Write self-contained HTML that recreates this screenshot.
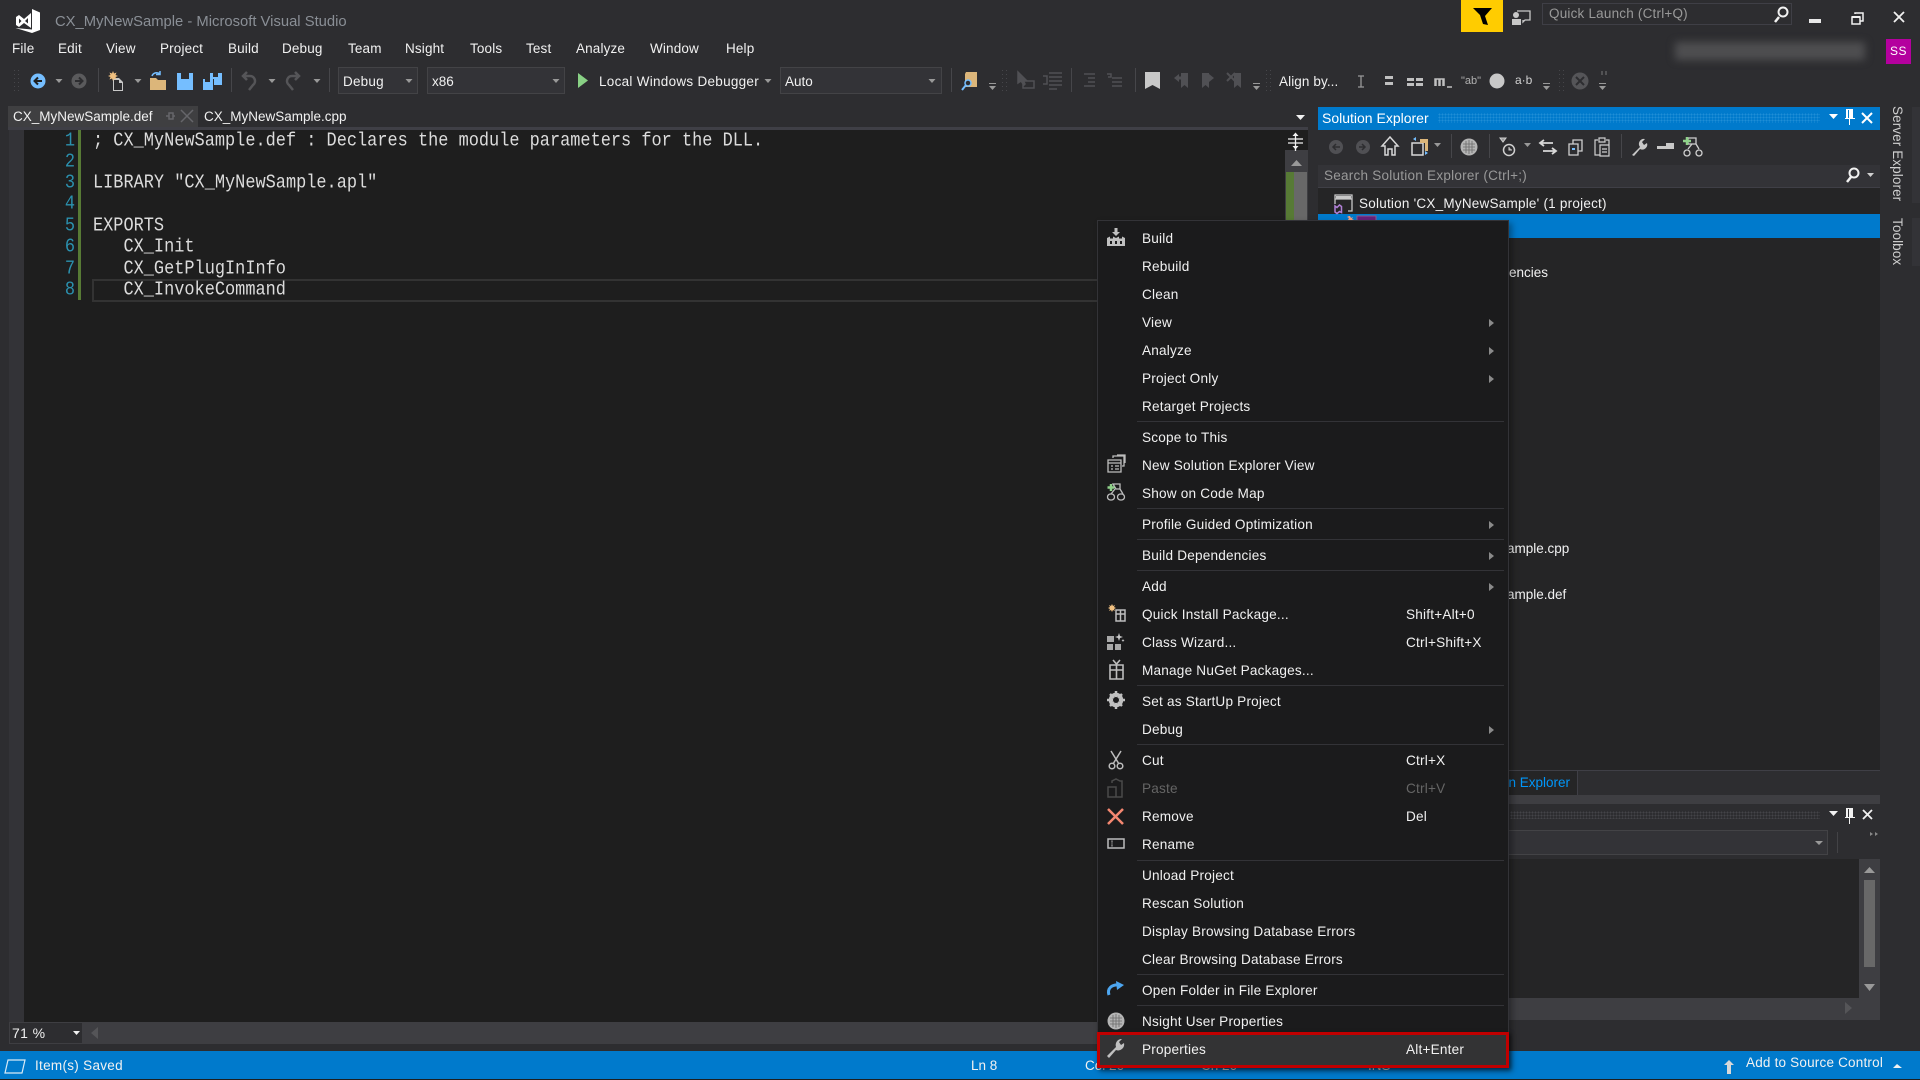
<!DOCTYPE html>
<html><head><meta charset="utf-8"><title>CX_MyNewSample - Microsoft Visual Studio</title>
<style>
html,body{margin:0;padding:0;width:1920px;height:1080px;overflow:hidden;background:#2d2d30}
body{position:relative;font-family:"Liberation Sans",sans-serif;font-size:13.5px;color:#f1f1f1}
.b{position:absolute}
.t{position:absolute;white-space:nowrap;line-height:20px;height:20px}
.mb{letter-spacing:.15px}
.c{position:absolute;white-space:pre;font-family:"Liberation Mono",monospace;font-size:16.93px;line-height:21px;color:#dcdcdc;left:93px;transform:scale(1,1.12);transform-origin:0 50%}
.n{position:absolute;font-family:"Liberation Mono",monospace;font-size:16.93px;line-height:21px;color:#2b91af;left:63px;width:12px;text-align:right;transform:scale(1,1.12)}
.m{position:absolute;left:1142px;white-space:nowrap;line-height:20px;height:20px;color:#f1f1f1;font-size:13.6px;letter-spacing:.2px}
.s{position:absolute;left:1406px;white-space:nowrap;line-height:20px;height:20px;color:#f1f1f1;font-size:13.6px;letter-spacing:.2px}
.sp{position:absolute;left:1137px;width:367px;height:1px;background:#333337}
.cb{position:absolute;box-sizing:border-box;border:1px solid #434346;background:#333337}
svg{position:absolute;left:0;top:0}
</style></head>
<body>
<!-- editor -->
<div class="b" style="left:8px;top:106px;width:190px;height:21px;background:#3f3f41"></div>
<div class="b" style="left:8px;top:127px;width:1300px;height:3px;background:#3f3f46"></div>
<div class="b" style="left:9px;top:130px;width:15px;height:892px;background:#333337"></div>
<div class="b" style="left:24px;top:130px;width:1261px;height:892px;background:#1e1e1e"></div>
<div class="b" style="left:78px;top:130px;width:3px;height:170px;background:#577a35"></div>
<div class="b" style="left:92px;top:279px;width:1010px;height:19px;border:2px solid #333;border-right:0"></div>
<div class="b" style="left:1285px;top:130px;width:23px;height:892px;background:#3e3e42"></div>
<div class="b" style="left:1285px;top:130px;width:23px;height:20px;background:#1e1e1e"></div>
<div class="b" style="left:1286px;top:172px;width:21px;height:60px;background:#686868"></div>
<div class="b" style="left:1286px;top:172px;width:8px;height:60px;background:#577a35"></div>
<div class="b" style="left:9px;top:1022px;width:1090px;height:22px;background:#3e3e42"></div>
<div class="cb" style="left:9px;top:1022px;width:74px;height:22px;background:#2d2d30;border-color:#3e3e42"></div>

<div class="t" style="left:12px;top:1023px;font-size:14px;letter-spacing:.4px;color:#f1f1f1">71 %</div>

<div class="n" style="top:131px">1</div><div class="n" style="top:152px">2</div><div class="n" style="top:173px">3</div><div class="n" style="top:194px">4</div><div class="n" style="top:216px">5</div><div class="n" style="top:237px">6</div><div class="n" style="top:259px">7</div><div class="n" style="top:280px">8</div>
<div class="c" style="top:131px">; CX_MyNewSample.def : Declares the module parameters for the DLL.</div>
<div class="c" style="top:173px">LIBRARY "CX_MyNewSample.apl"</div>
<div class="c" style="top:216px">EXPORTS</div>
<div class="c" style="top:237px">   CX_Init</div>
<div class="c" style="top:259px">   CX_GetPlugInInfo</div>
<div class="c" style="top:280px">   CX_InvokeCommand</div>

<!-- solution explorer -->
<div class="b" style="left:1318px;top:107px;width:562px;height:663px;background:#252526"></div>
<div class="b" style="left:1318px;top:130px;width:562px;height:35px;background:#2d2d30"></div>
<div class="b" style="left:1318px;top:107px;width:562px;height:23px;background:#007acc"></div>
<div class="b" style="left:1438px;top:113px;width:382px;height:10px;background-image:radial-gradient(#1f8ed6 .8px,transparent .9px);background-size:3px 3px"></div>
<div class="b" style="left:1318px;top:165px;width:562px;height:22px;background:#333337;border-bottom:1px solid #3f3f46"></div>
<div class="b" style="left:1318px;top:214px;width:562px;height:24px;background:#007acc"></div>
<div class="t" style="left:1322px;top:108px;font-size:14px;color:#fff">Solution Explorer</div>
<div class="t" style="left:1324px;top:166px;font-size:13.5px;color:#999;letter-spacing:.25px">Search Solution Explorer (Ctrl+;)</div>
<div class="t" style="left:1359px;top:194px;font-size:13.5px;color:#f1f1f1;letter-spacing:.23px">Solution 'CX_MyNewSample' (1 project)</div>
<div class="t" style="left:1509px;top:263px;font-size:13.5px">encies</div>
<div class="t" style="left:1507px;top:539px;font-size:13.5px">ample.cpp</div>
<div class="t" style="left:1507px;top:585px;font-size:13.5px">ample.def</div>
<!-- lower panel -->
<div class="b" style="left:1318px;top:770px;width:562px;height:1px;background:#3f3f46"></div>
<div class="b" style="left:1318px;top:771px;width:259px;height:24px;background:#252526;border-right:1px solid #3f3f46"></div>
<div class="t" style="left:1440px;top:773px;width:130px;text-align:right;color:#0097fb;font-size:13.5px">Solution Explorer</div>
<div class="b" style="left:1318px;top:795px;width:562px;height:9px;background:#3e3e42"></div>
<div class="b" style="left:1318px;top:804px;width:562px;height:55px;background:#2d2d30"></div>
<div class="b" style="left:1510px;top:811px;width:310px;height:8px;background-image:radial-gradient(#444448 .8px,transparent .9px);background-size:3px 3px"></div>
<div class="cb" style="left:1318px;top:830px;width:510px;height:25px;background:#333337"></div>
<div class="b" style="left:1837px;top:832px;width:1px;height:21px;background:#434346"></div>
<div class="b" style="left:1318px;top:859px;width:541px;height:139px;background:#252526"></div>
<div class="b" style="left:1859px;top:859px;width:21px;height:161px;background:#3e3e42"></div>
<div class="b" style="left:1318px;top:998px;width:562px;height:22px;background:#3e3e42"></div>
<div class="b" style="left:1864px;top:880px;width:11px;height:87px;background:#686868"></div>

<!-- right strip -->
<div class="b" style="left:1912px;top:107px;width:8px;height:96px;background:#333337"></div>
<div class="b" style="left:1912px;top:218px;width:8px;height:48px;background:#333337"></div>
<div class="t" style="left:1887px;top:106px;writing-mode:vertical-rl;height:auto;font-size:13.5px;color:#d0d0d0;letter-spacing:.1px">Server Explorer</div>
<div class="t" style="left:1887px;top:218px;writing-mode:vertical-rl;height:auto;font-size:13.5px;color:#d0d0d0;letter-spacing:.1px">Toolbox</div>

<!-- title / menu bar -->
<div class="t" style="left:55px;top:12px;font-size:14.8px;color:#8a8f96">CX_MyNewSample - Microsoft Visual Studio</div>
<div class="t mb" style="left:12px;top:39px">File</div>
<div class="t mb" style="left:58px;top:39px">Edit</div>
<div class="t mb" style="left:106px;top:39px">View</div>
<div class="t mb" style="left:160px;top:39px">Project</div>
<div class="t mb" style="left:228px;top:39px">Build</div>
<div class="t mb" style="left:282px;top:39px">Debug</div>
<div class="t mb" style="left:348px;top:39px">Team</div>
<div class="t mb" style="left:405px;top:39px">Nsight</div>
<div class="t mb" style="left:470px;top:39px">Tools</div>
<div class="t mb" style="left:526px;top:39px">Test</div>
<div class="t mb" style="left:576px;top:39px">Analyze</div>
<div class="t mb" style="left:650px;top:39px">Window</div>
<div class="t mb" style="left:726px;top:39px">Help</div>
<!-- tabs -->
<div class="t" style="left:13px;top:107px;font-size:13.5px">CX_MyNewSample.def</div>
<div class="t" style="left:204px;top:107px;font-size:13.5px">CX_MyNewSample.cpp</div>
<!-- toolbar -->
<div class="cb" style="left:338px;top:67px;width:80px;height:27px"></div>
<div class="cb" style="left:427px;top:67px;width:138px;height:27px"></div>
<div class="cb" style="left:780px;top:67px;width:162px;height:27px"></div>
<div class="t" style="left:343px;top:72px;letter-spacing:.2px">Debug</div>
<div class="t" style="left:432px;top:72px">x86</div>
<div class="t" style="left:599px;top:72px;letter-spacing:.28px">Local Windows Debugger</div>
<div class="t" style="left:785px;top:72px">Auto</div>
<div class="t" style="left:1279px;top:72px;letter-spacing:.1px">Align by...</div>

<!-- top right -->
<div class="b" style="left:1461px;top:0;width:42px;height:32px;background:#ffcc00"></div>
<div class="cb" style="left:1542px;top:3px;width:250px;height:22px;background:#2d2d30;border-color:#3f3f46"></div>
<div class="t" style="left:1549px;top:4px;color:#999;font-size:13.5px;letter-spacing:.2px">Quick Launch (Ctrl+Q)</div>
<div class="b" style="left:1675px;top:42px;width:190px;height:18px;background:#4e4e50;filter:blur(4px)"></div>
<div class="b" style="left:1886px;top:39px;width:25px;height:25px;background:#b4009e;color:#fff;font-size:12px;line-height:25px;text-align:center;letter-spacing:.5px">SS</div>

<!-- status bar -->
<div class="b" style="left:0;top:1051px;width:1920px;height:28px;background:#007acc"></div>
<div class="b" style="left:0;top:1079px;width:1920px;height:1px;background:#1e1e1e"></div>
<div class="t" style="left:35px;top:1056px;color:#f1f1f1;letter-spacing:.3px">Item(s) Saved</div>
<div class="t" style="left:971px;top:1056px">Ln 8</div>
<div class="t" style="left:1085px;top:1056px">Col 26</div>
<div class="t" style="left:1201px;top:1056px">Ch 26</div>
<div class="t" style="left:1368px;top:1056px">INS</div>
<div class="t" style="left:1746px;top:1053px;letter-spacing:.2px">Add to Source Control</div>

<!-- base icon layer -->
<svg width="1920" height="1080" viewBox="0 0 1920 1080">
<!-- VS logo -->
<path fill="#fff" fill-rule="evenodd" d="M32 9L40 12.5V30L32 33L15.5 28L32 29.5ZM16 17L19 15L24 19L31 13V28L24 23L19 27L16 25ZM19 18.5V23.5L21.5 21ZM25 21L28 23.5V18Z"/>
<!-- grippers -->
<g fill="#46464a"><path d="M14 70h1v1h-1zM18 70h1v1h-1zM14 74h1v1h-1zM18 74h1v1h-1zM14 78h1v1h-1zM18 78h1v1h-1zM14 82h1v1h-1zM18 82h1v1h-1zM14 86h1v1h-1zM18 86h1v1h-1zM14 90h1v1h-1zM18 90h1v1h-1z"/>
<path d="M1002 70h1v1h-1zM1006 70h1v1h-1zM1002 74h1v1h-1zM1006 74h1v1h-1zM1002 78h1v1h-1zM1006 78h1v1h-1zM1002 82h1v1h-1zM1006 82h1v1h-1zM1002 86h1v1h-1zM1006 86h1v1h-1zM1002 90h1v1h-1zM1006 90h1v1h-1z"/>
<path d="M1266 70h1v1h-1zM1270 70h1v1h-1zM1266 74h1v1h-1zM1270 74h1v1h-1zM1266 78h1v1h-1zM1270 78h1v1h-1zM1266 82h1v1h-1zM1270 82h1v1h-1zM1266 86h1v1h-1zM1270 86h1v1h-1zM1266 90h1v1h-1zM1270 90h1v1h-1z"/>
<path d="M1559 70h1v1h-1zM1563 70h1v1h-1zM1559 74h1v1h-1zM1563 74h1v1h-1zM1559 78h1v1h-1zM1563 78h1v1h-1zM1559 82h1v1h-1zM1563 82h1v1h-1zM1559 86h1v1h-1zM1563 86h1v1h-1zM1559 90h1v1h-1zM1563 90h1v1h-1z"/></g>
<!-- toolbar separators -->
<g fill="#46464a"><rect x="98" y="68" width="1" height="24"/><rect x="231" y="68" width="1" height="24"/><rect x="329" y="68" width="1" height="24"/><rect x="951" y="68" width="1" height="24"/><rect x="1071" y="68" width="1" height="24"/><rect x="1135" y="68" width="1" height="24"/><rect x="1451" y="134" width="1" height="24"/><rect x="1489" y="134" width="1" height="24"/><rect x="1621" y="134" width="1" height="24"/></g>
<!-- nav -->
<circle cx="38" cy="81" r="7.5" fill="#75beff"/><path d="M42 81H35M38 77.5L34.5 81L38 84.5" fill="none" stroke="#1e1e1e" stroke-width="2"/>
<circle cx="79" cy="81" r="7.5" fill="#5a5a5c"/><path d="M75 81H82M79 77.5L82.5 81L79 84.5" fill="none" stroke="#2d2d30" stroke-width="2"/>
<!-- dropdown arrows -->
<g fill="#999"><path d="M55.500 79h7l-3.500 4zM134.500 79h7l-3.500 4zM268.500 79h7l-3.500 4zM313.500 79h7l-3.500 4zM405.500 79h7l-3.500 4zM552.500 79h7l-3.500 4zM764.500 79h7l-3.500 4zM928.500 79h7l-3.500 4z"/>
<path d="M989 86h7l-3.500 4zM1253 86h7l-3.500 4zM1543 86h7l-3.500 4zM1599 86h7l-3.500 4z"/>
<path d="M989 83h7v1h-7zM1253 83h7v1h-7zM1543 83h7v1h-7zM1599 83h7v1h-7z"/><path d="M1434 143h7l-3.500 4zM1524 143h7l-3.500 4z"/></g>
<!-- new project -->
<path d="M113 78h6l4 4v9h-10z M114 80v10h8v-7h-3v-3z" fill="#c8c8c8" fill-rule="evenodd"/><path d="M113 71l1 2.500 2.500-1-1 2.500 2.500 1-2.500 1 1 2.500-2.500-1-1 2.500-1-2.500-2.500 1 1-2.500-2.500-1 2.500-1-1-2.500 2.500 1z" fill="#f0c080"/>
<!-- open -->
<path d="M150 78h6l2 2h8v10h-16z" fill="#dcb67a"/><path d="M152 76a5 5 0 0 1 8-2M160 71v3.500h-4" fill="none" stroke="#75beff" stroke-width="1.500"/>
<!-- save -->
<path d="M177 73h16v17h-16z" fill="#75beff"/><rect x="181" y="73" width="8" height="6" fill="#2d2d30"/>
<path d="M203 79h10v11h-10zM210 73h12v12h-8v-6h-4z" fill="#75beff"/><rect x="213" y="73" width="5" height="4" fill="#2d2d30"/><rect x="205" y="79" width="5" height="3" fill="#2d2d30"/>
<!-- undo redo -->
<path d="M244 76h6a5 5 0 0 1 3 9l-4 5M247 72l-4 4 4 4" fill="none" stroke="#555558" stroke-width="2.500"/>
<path d="M298 76h-6a5 5 0 0 0-3 9l4 5M295 72l4 4-4 4" fill="none" stroke="#555558" stroke-width="2.500"/>
<!-- play -->
<path d="M578 73l10 7.500-10 7.500z" fill="#89d185"/>
<!-- find folder -->
<path d="M965 74l1-2h11v15h-12z" fill="#dcb67a"/><circle cx="968" cy="83" r="3" fill="#2d2d30" stroke="#75beff" stroke-width="1.500"/><path d="M966 85l-4 5" stroke="#75beff" stroke-width="2"/>
<!-- disabled -->
<g fill="none" stroke="#505054" stroke-width="1.500"><path d="M1018 72v11l3-2 3 4 1-1-2-4h3z" fill="#505054"/><rect x="1023" y="81" width="11" height="7"/>
<path d="M1043 76h4v8h-4M1049 73h13M1049 77h13M1049 81h13M1049 85h13M1049 89h8"/>
<path d="M1084 74h11M1088 78h7M1088 82h7M1084 86h11"/><path d="M1107 74h4v3h-3M1112 78h10M1112 82h10M1112 86h10"/></g>
<path d="M1145 72h15v17l-7.500-4-7.500 4z" fill="#c8c8c8"/>
<g fill="#505054"><path d="M1181 73h7v15l-3.500-3-3.500 3zM1202 73h7v15l-3.500-3-3.500 3zM1234 73h7v15l-3.500-3-3.500 3z"/><path d="M1174 78l5-4v2.500h4v3h-4v2.500zM1214 78l-5-4v2.500h-5v3h5v2.500z"/><path d="M1227 73l8 8M1235 73l-8 8" stroke="#505054" stroke-width="2"/></g>
<!-- nsight toolbar -->
<path d="M1358 76h6M1358 87h6M1361 76v11" stroke="#999" stroke-width="1.300" fill="none"/>
<g fill="#c0c0c0"><path d="M1385 76h8v3h-8zM1385 82h8v3h-8z"/><path d="M1407 78h7v3h-7zM1416 78h7v3h-7zM1407 83h7v3h-7zM1416 83h7v3h-7z"/></g>
<path d="M1435 86v-7h1v7M1439 86v-7h1v7M1443 86v-7h1v7M1436 79h8M1447 87h5" fill="none" stroke="#c0c0c0" stroke-width="1.500"/>
<text x="1461" y="84" font-size="11" fill="#b0b0b0" font-family="Liberation Sans, sans-serif">"ab"</text>
<circle cx="1497" cy="81" r="7.500" fill="#c8c8c8"/>
<text x="1515" y="84" font-size="12" fill="#d0d0d0" font-family="Liberation Sans, sans-serif">a·b</text>
<circle cx="1580" cy="81" r="8.500" fill="#555558"/><path d="M1576 77l8 8M1584 77l-8 8" stroke="#2d2d30" stroke-width="2"/>
<path d="M1602 71v4M1606 71v4" stroke="#777" stroke-width="1"/>
<!-- tab pin & close -->
<path d="M166 116h3M169 113v6h4v-6zM173 116h2M181 110l12 12M193 110l-12 12" fill="none" stroke="#66666a" stroke-width="1.500"/>
<path d="M1296 115h9l-4.500 5z" fill="#f1f1f1"/>
<!-- splitter -->
<path d="M1288 139h15M1288 143h15M1295.500 134v17" stroke="#f1f1f1" stroke-width="1.300" fill="none"/>
<path d="M1292.500 136l3-3.500 3 3.500zM1292.500 146l3 3.500 3-3.500z" fill="#f1f1f1"/>
<path d="M1291 166l5.500-6 5.500 6z" fill="#999"/>
<!-- SE title icons -->
<path d="M1829 114h9l-4.500 5z" fill="#fff"/>
<path d="M1846 109h7v9h2v1h-5v6h-1v-6h-4v-1h1zM1848 110v8h1v-8z" fill="#fff" fill-rule="evenodd"/>
<path d="M1862 113l10 10M1872 113l-10 10" stroke="#fff" stroke-width="2"/>
<!-- SE toolbar -->
<circle cx="1336" cy="147" r="7" fill="#505054"/><path d="M1340 147h-6M1336 144l-3 3 3 3" fill="none" stroke="#2d2d30" stroke-width="1.500"/>
<circle cx="1363" cy="147" r="7" fill="#505054"/><path d="M1359 147h6M1362 144l3 3-3 3" fill="none" stroke="#2d2d30" stroke-width="1.500"/>
<path d="M1382 146l8-9 8 9h-3v9h-3v-6h-4v6h-3v-9z" fill="none" stroke="#d8d8d8" stroke-width="1.500"/>
<path d="M1412 143h11v12h-11z" fill="none" stroke="#d8d8d8" stroke-width="1.500"/><path d="M1420 139h8v12h-3v-8h-5z" fill="#dcb67a"/><path d="M1416 137l-3 2 3 2zM1425 155l3-2-3-2z" fill="#75beff"/>
<circle cx="1469" cy="147" r="8.500" fill="#b4b4b4"/><path d="M1463 144h12M1463 147h12M1463 150h12M1466 141v12M1469 140v14M1472 141v12" stroke="#6a6a6a" stroke-width=".8"/>
<circle cx="1509" cy="150" r="5.500" fill="none" stroke="#d0d0d0" stroke-width="1.500"/><path d="M1509 147v3h3M1500 138h6l-3 4z" fill="#999" stroke="#d0d0d0"/>
<path d="M1541 143h12M1544 140l-4 3 4 3M1555 151h-12M1552 148l4 3-4 3" fill="none" stroke="#d8d8d8" stroke-width="1.800"/>
<path d="M1569 144h9v11h-9zM1573 144v-4h9v11h-4" fill="none" stroke="#d0d0d0" stroke-width="1.300"/><rect x="1572" y="148" width="3" height="2" fill="#75beff"/>
<path d="M1598 140h-3v15h5M1606 140h3v7M1599 138h6v4h-6zM1600 145h9v11h-9zM1602 149h5M1602 152h5" fill="none" stroke="#d0d0d0" stroke-width="1.200"/>
<path d="M1632 155l8-8a5 5 0 0 1 5-8l-3 3 2 3 3-2a5 5 0 0 1-7 6l-6 7z" fill="#c8c8c8"/>
<path d="M1657 146h9v-3h8v6h-17z" fill="#c8c8c8"/>
<path d="M1688 138h8v6h-8zM1692 144l-4 5M1696 144l3 5" fill="none" stroke="#d0d0d0" stroke-width="1.300"/><circle cx="1687" cy="153" r="3" fill="none" stroke="#d0d0d0" stroke-width="1.300"/><circle cx="1699" cy="153" r="3" fill="none" stroke="#d0d0d0" stroke-width="1.300"/><path d="M1687 137v8M1683 141h8" stroke="#8fd18a" stroke-width="2.500"/>
<circle cx="1854" cy="173" r="4.500" fill="none" stroke="#f1f1f1" stroke-width="2"/><path d="M1851 177l-4 5" stroke="#f1f1f1" stroke-width="2.500"/>
<path d="M1867 173h7l-3.500 4z" fill="#d0d0d0"/>
<!-- solution icon -->
<path d="M1335 195h17v16h-4M1335 195v9M1335 195h17v4h-17z" fill="none" stroke="#c8c8c8" stroke-width="1.300"/><rect x="1336" y="196" width="15" height="3" fill="#c8c8c8"/>
<path d="M1335 206l2 1.500 2.500-2.500 2 1.500v6l-2-1-2.500 2-2-1.500z" fill="none" stroke="#b180d7" stroke-width="1.500"/>
<!-- project icon -->
<rect x="1357" y="216" width="19" height="7" fill="#68217a" stroke="#8a5a90"/><path d="M1350 216l1 2 2-1-1 2 2 1-4 1-2-1 1-2-2-1 2-1z" fill="#f4a080"/>
<!-- lower panel icons -->
<path d="M1829 811h9l-4.500 5z" fill="#f1f1f1"/>
<path d="M1846 808h7v9h2v1h-5v6h-1v-6h-4v-1h1zM1848 809v8h1v-8z" fill="#f1f1f1" fill-rule="evenodd"/>
<path d="M1863 810l9 9M1872 810l-9 9" stroke="#f1f1f1" stroke-width="1.800"/>
<path d="M1815 841h8l-4 4z" fill="#999"/>
<path d="M1870 832l3 2-3 2zM1875 832l3 2-3 2z" fill="#888"/>
<path d="M1864 873l5.500-6 5.500 6z" fill="#999"/>
<path d="M1864 984l5.500 7 5.500-7z" fill="#999"/>
<path d="M1845 1002l7 6-7 6z" fill="#555558"/>
<!-- bottom -->
<path d="M73 1031h7l-3.500 4z" fill="#f1f1f1"/>
<path d="M98 1016l-7 6 7 6z" transform="translate(0,11)" fill="#555558"/>
<!-- status -->
<path d="M8 1060h17l-3 13H5z" fill="none" stroke="#d8eaf6" stroke-width="1.200"/>
<path d="M1729 1060l-5 5h3v9h4v-9h3z" fill="#d8d8d8"/>
<path d="M1893 1068l4-4 5 4z" fill="#f1f1f1"/>
<!-- top right -->
<path d="M1473 8h19l-7 8 3 9-5-1-3-9z" fill="#000"/>
<path d="M1517 11h13v9h-5l-2 2v-2" fill="none" stroke="#c8c8c8" stroke-width="1.300"/><circle cx="1516" cy="15" r="3" fill="#c8c8c8"/><path d="M1512 19h9v6h-9z" fill="#c8c8c8"/>
<circle cx="1783" cy="12" r="4.500" fill="none" stroke="#f1f1f1" stroke-width="2"/><path d="M1779 17l-4 5" stroke="#f1f1f1" stroke-width="2.500"/>
<rect x="1809" y="19" width="12" height="4" fill="#e8e8e8"/>
<path d="M1855 14v-1h8v8h-3" fill="none" stroke="#f1f1f1" stroke-width="1.500"/><path d="M1852 17h8v7h-8z" fill="none" stroke="#f1f1f1" stroke-width="1.500"/><rect x="1852" y="16" width="8" height="2" fill="#f1f1f1"/>
<path d="M1894 12l10 10M1904 12l-10 10" stroke="#f1f1f1" stroke-width="1.800"/>
</svg>

<!-- context menu -->
<div class="b" style="left:1097px;top:220px;width:410px;height:846px;background:#1b1b1c;border:1px solid #333337;box-shadow:3px 3px 6px rgba(0,0,0,.35)"></div>
<div class="b" style="left:1097px;top:1032px;width:406px;height:30px;background:#333334;border:3px solid #c00000;box-shadow:2px 2px 4px rgba(0,0,0,.5)"></div>
<div class="sp" style="top:421px"></div><div class="sp" style="top:508px"></div><div class="sp" style="top:539px"></div><div class="sp" style="top:570px"></div><div class="sp" style="top:685px"></div><div class="sp" style="top:744px"></div><div class="sp" style="top:860px"></div><div class="sp" style="top:974px"></div><div class="sp" style="top:1005px"></div>
<div class="m" style="top:229px">Build</div>
<div class="m" style="top:257px">Rebuild</div>
<div class="m" style="top:285px">Clean</div>
<div class="m" style="top:313px">View</div>
<div class="m" style="top:341px">Analyze</div>
<div class="m" style="top:369px">Project Only</div>
<div class="m" style="top:397px">Retarget Projects</div>
<div class="m" style="top:428px">Scope to This</div>
<div class="m" style="top:456px">New Solution Explorer View</div>
<div class="m" style="top:484px">Show on Code Map</div>
<div class="m" style="top:515px">Profile Guided Optimization</div>
<div class="m" style="top:546px">Build Dependencies</div>
<div class="m" style="top:577px">Add</div>
<div class="m" style="top:605px">Quick Install Package...</div>
<div class="m" style="top:633px">Class Wizard...</div>
<div class="m" style="top:661px">Manage NuGet Packages...</div>
<div class="m" style="top:692px">Set as StartUp Project</div>
<div class="m" style="top:720px">Debug</div>
<div class="m" style="top:751px">Cut</div>
<div class="m" style="top:779px;color:#656565">Paste</div>
<div class="m" style="top:807px">Remove</div>
<div class="m" style="top:835px">Rename</div>
<div class="m" style="top:866px">Unload Project</div>
<div class="m" style="top:894px">Rescan Solution</div>
<div class="m" style="top:922px">Display Browsing Database Errors</div>
<div class="m" style="top:950px">Clear Browsing Database Errors</div>
<div class="m" style="top:981px">Open Folder in File Explorer</div>
<div class="m" style="top:1012px">Nsight User Properties</div>
<div class="m" style="top:1040px">Properties</div>
<div class="s" style="top:605px">Shift+Alt+0</div>
<div class="s" style="top:633px">Ctrl+Shift+X</div>
<div class="s" style="top:751px">Ctrl+X</div>
<div class="s" style="top:779px;color:#656565">Ctrl+V</div>
<div class="s" style="top:807px">Del</div>
<div class="s" style="top:1040px">Alt+Enter</div>

<svg width="1920" height="1080" viewBox="0 0 1920 1080">
<!-- submenu arrows -->
<g fill="#8a8a8a" transform="translate(0,1)"><path d="M1489 318l5 4-5 4zM1489 346l5 4-5 4zM1489 374l5 4-5 4zM1489 520l5 4-5 4zM1489 551l5 4-5 4zM1489 582l5 4-5 4zM1489 725l5 4-5 4z"/></g>
<g fill="#c0c0c0">
<!-- build -->
<path d="M1114.500 228h3v4h2.500l-4 4-4-4h2.500zM1107 246v-8l3-1.500v2h3v-2l3 1.500 3-1.500v2h3v-2l3 1.500v8z"/>
</g>
<g fill="#1b1b1c"><rect x="1110" y="241" width="2" height="3"/><rect x="1115" y="241" width="2" height="3"/><rect x="1120" y="241" width="2" height="3"/></g>
<!-- new solution view -->
<path d="M1113 458v-2h11v10h-2M1117 455h8v8M1108 460h13v12h-13zM1108 463h13M1111 466h2M1115 466h4M1111 469h2M1115 469h4" fill="none" stroke="#bdbdbd" stroke-width="1.300"/>
<!-- show on code map -->
<path d="M1113 484h7v5h-4zM1115 489l-4 5M1120 489l3 5" fill="none" stroke="#bdbdbd" stroke-width="1.300"/><rect x="1107.500" y="494" width="7" height="6" rx="3" fill="none" stroke="#bdbdbd" stroke-width="1.300"/><rect x="1117.500" y="494" width="7" height="6" rx="3" fill="none" stroke="#bdbdbd" stroke-width="1.300"/><path d="M1111 484v7M1107.500 487.500h7" stroke="#8fd18a" stroke-width="2.500"/>
<!-- quick install -->
<path d="M1112 604l1 2 2-1-1 2 2 1-2 1 1 2-2-1-1 2-1-2-2 1 1-2-2-1 2-1-1-2 2 1z" fill="#f0c080"/>
<path d="M1116 610h9v11h-9zM1116 614h9M1120.500 610v11" fill="none" stroke="#bdbdbd" stroke-width="1.500"/>
<!-- class wizard -->
<g fill="#a8a8a8"><rect x="1107" y="636" width="7" height="6"/><rect x="1107" y="644" width="6" height="6"/><rect x="1115" y="644" width="6" height="6"/></g>
<path d="M1119 633l1 3 3 1-3 1-1 3-1-3-3-1 3-1zM1123 639l.500 1 1 .500-1 .500-.500 1-.500-1-1-.500 1-.500z" fill="#c8c8c8"/>
<!-- nuget -->
<path d="M1110 665h13v14h-13zM1110 670h13M1116.500 665v14M1113 660l3.500 4 3.500-4" fill="none" stroke="#bdbdbd" stroke-width="1.600"/>
<!-- gear -->
<circle cx="1116" cy="700" r="5.500" fill="none" stroke="#c0c0c0" stroke-width="3.500"/><path d="M1116 691v18M1107 700h18M1110 694l12 12M1122 694l-12 12" stroke="#c0c0c0" stroke-width="2.500"/><circle cx="1116" cy="700" r="3" fill="#1b1b1c"/>
<!-- cut -->
<path d="M1111 751l8 13M1121 751l-8 13" stroke="#bdbdbd" stroke-width="1.500"/><circle cx="1112" cy="766" r="2.800" fill="none" stroke="#bdbdbd" stroke-width="1.500"/><circle cx="1120" cy="766" r="2.800" fill="none" stroke="#bdbdbd" stroke-width="1.500"/>
<!-- paste -->
<path d="M1112 783v-2l4-2 4 2h2v16h-6M1108 787h8v10h-8z" fill="none" stroke="#4a4a4a" stroke-width="1.500"/>
<!-- remove -->
<path d="M1108 809l15 15M1123 809l-15 15" stroke="#f48771" stroke-width="2.500"/>
<!-- rename -->
<rect x="1108" y="839" width="16" height="9" fill="none" stroke="#bdbdbd" stroke-width="1.500"/><path d="M1111 841h2M1111 846h2M1112 841v5" stroke="#999" stroke-width=".8"/>
<!-- open folder -->
<path d="M1109 995c-2-6 2-11 11-10" fill="none" stroke="#4da6f0" stroke-width="3"/><path d="M1116 981l8 4-7 5z" fill="#4da6f0"/>
<!-- nsight -->
<circle cx="1116" cy="1021" r="8.500" fill="#b4b4b4"/><path d="M1110 1018h12M1110 1021h12M1110 1024h12M1113 1015v12M1116 1014v14M1119 1015v12" stroke="#6a6a6a" stroke-width=".8"/>
<!-- wrench -->
<path d="M1107 1056l9-9a6 6 0 0 1 6-8l-3 3 2 3 3-2a6 6 0 0 1-8 7l-7 8z" fill="#c0c0c0"/>
</svg>
</body></html>
